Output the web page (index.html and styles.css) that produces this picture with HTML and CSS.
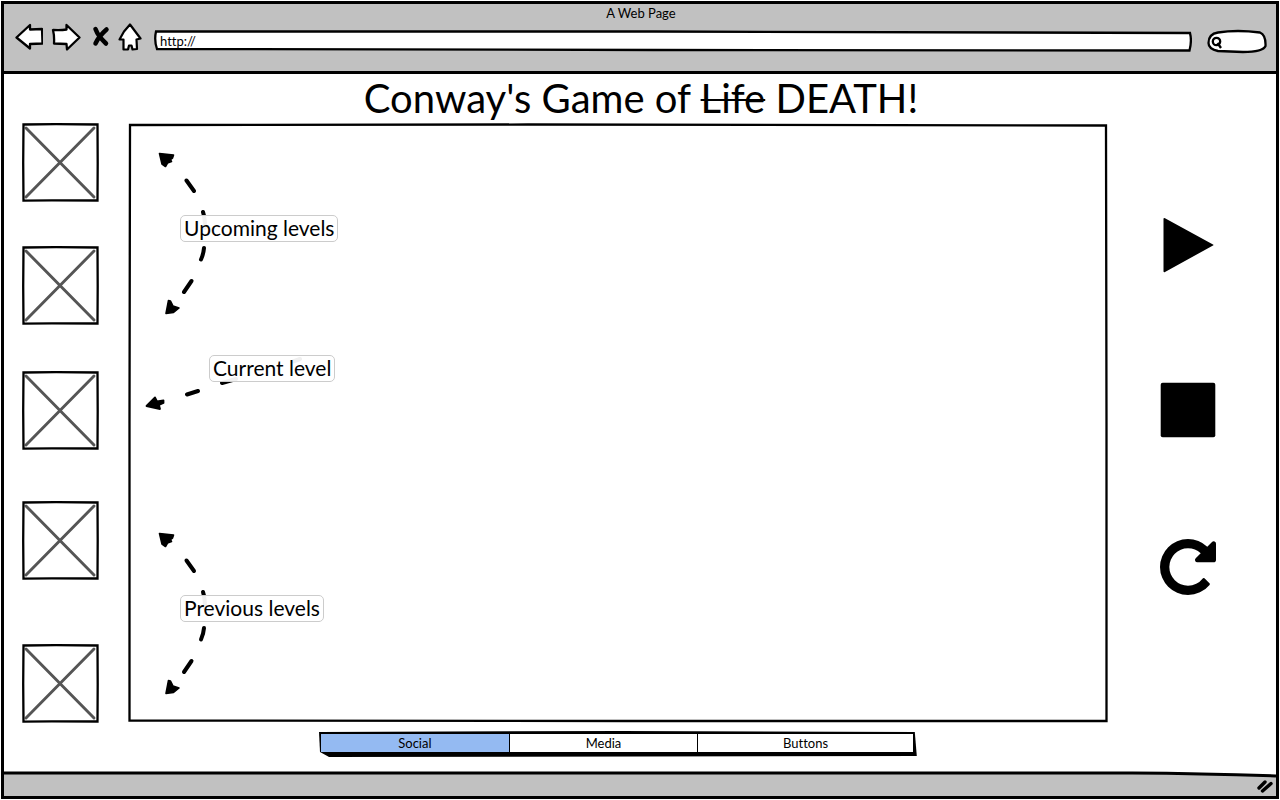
FILE: index.html
```html
<!DOCTYPE html>
<html lang="en">
<head>
<meta charset="utf-8">
<title>A Web Page</title>
<link rel="stylesheet" href="styles.css">
</head>
<body>
<svg class="defs" aria-hidden="true">
  <symbol id="placeholder" viewBox="0 0 77 79">
    <path d="M4 5 72 74M72 5 4 74" fill="none" stroke="#555" stroke-width="2.900" stroke-linecap="round"/>
    <path d="M1.500 1.500 34 1.200 75.500 1.500 75.700 40 75.500 77.500 30 77.300 1.500 77.700 1.200 40Z" fill="none" stroke="#000" stroke-width="2.300"/>
  </symbol>
  <symbol id="curve" viewBox="0 0 60 170">
    <path d="M4.500 3.500 18.500 5 17.500 8 15.500 9.500 16.500 11.500 12.500 13 10.500 16.500 7 14Z" stroke="#000" stroke-width="1.600" stroke-linejoin="round"/>
    <path d="M11 163.500 13.500 150.500 15.500 151 18 156 24 158 18.500 162.500Z" stroke="#000" stroke-width="1.600" stroke-linejoin="round"/>
    <path d="M31.500 30.500 39 41M48 62Q50 68 50 78M49 98Q48.500 104 46 109.500M36.500 131 29 142" fill="none" stroke="#000" stroke-width="4" stroke-linecap="round"/>
  </symbol>
</svg>

<div class="window">
  <header class="chrome">
    <div class="page-name">A Web Page</div>
    <div class="toolbar">
      <button class="tool" aria-label="Back"><svg width="28" height="28" viewBox="0 0 28 28"><path d="M1.500 14.500 15 2 15 6.500 27 6 27.500 20.500 15 21 15 25.500Z" fill="#fff" stroke="#000" stroke-width="2.300" stroke-linejoin="round"/></svg></button>
      <button class="tool" aria-label="Forward"><svg width="30" height="28" viewBox="0 0 30 28"><path d="M2 7Q10 7.500 15.500 6.500L15.500 2 28.500 14.500 16 26.500 15.500 21 3 20.500Q3.500 13 2 7Z" fill="#fff" stroke="#000" stroke-width="2.300" stroke-linejoin="round"/></svg></button>
      <button class="tool stop-load" aria-label="Stop"><svg width="18" height="28" viewBox="0 0 18 28"><path d="M3.500 6Q6 13 14 20.500M14.500 6.500Q7 13 3.500 20.500" fill="none" stroke="#000" stroke-width="4.500" stroke-linecap="round"/></svg></button>
      <button class="tool" aria-label="Home"><svg width="24" height="28" viewBox="0 0 24 28"><path d="M12 1.500 22.500 15.500 18.500 16.500 19 26 14.500 26.500 13.500 22.500 11 22.500 10 26.500 5.500 26.500 5.500 16.500 1.500 16.500 6 8.500Z" fill="#fff" stroke="#000" stroke-width="2.200" stroke-linejoin="round"/></svg></button>
      <div class="field address">
        <svg class="outline" viewBox="0 0 1038 22" preserveAspectRatio="none" aria-hidden="true"><path d="M2 1.500 500 1.500 1036 3Q1038 11 1035.500 20.500L500 20 3 19Q0 10 2 1.500Z"/></svg>
        <input type="text" value="http://" aria-label="Address">
      </div>
      <div class="field search">
        <svg class="outline" viewBox="0 0 60 25" aria-hidden="true"><path d="M11 3.500Q30 .500 53 3.500 59 6 58.500 17 56 23 36 23L11 22Q1.500 20 1.500 14 1.500 5 11 3.500Z"/><circle cx="9.500" cy="12.500" r="3.700"/><path d="M10.500 14 14 19"/></svg>
        <input type="text" aria-label="Search">
      </div>
    </div>
  </header>

  <main class="content">
    <h1 class="heading">Conway's Game of <s>Life</s> DEATH!</h1>

    <nav class="levels" aria-label="Levels">
      <svg class="thumb"><use href="#placeholder"/></svg>
      <svg class="thumb"><use href="#placeholder"/></svg>
      <svg class="thumb"><use href="#placeholder"/></svg>
      <svg class="thumb"><use href="#placeholder"/></svg>
      <svg class="thumb"><use href="#placeholder"/></svg>
    </nav>

    <section class="board">
      <svg class="outline" viewBox="0 0 980 600" preserveAspectRatio="none" aria-hidden="true"><path d="M2 2 400 1.500 978 2.500 978.500 300 978.500 598 500 598 1.500 597.500 1.500 300Z"/></svg>
      <svg class="note-arrow upcoming-arrow"><use href="#curve"/></svg>
      <svg class="note-arrow current-arrow" viewBox="0 0 170 60"><path d="M3.500 51 12 42.500 14 46.500 20.500 45.500 20.500 48 16 50 17 54Z" stroke="#000" stroke-width="1.800" stroke-linejoin="round"/><path d="M44 39.500 55 36M79 28 93 24M150 6.500 157 4" fill="none" stroke="#000" stroke-width="4" stroke-linecap="round"/></svg>
      <svg class="note-arrow previous-arrow"><use href="#curve"/></svg>
      <span class="note upcoming">Upcoming levels</span>
      <span class="note current">Current level</span>
      <span class="note previous">Previous levels</span>
    </section>

    <div class="controls">
      <button class="control" aria-label="Play"><svg width="56" height="56" viewBox="0 0 56 56"><path d="M3.500 2Q3.500 .500 5 1.300L53 27.500Q54 28 53 28.500L5 55Q3.500 56 3.500 54Z"/></svg></button>
      <button class="control" aria-label="Stop"><svg width="56" height="56" viewBox="0 0 56 56"><rect x=".700" y=".700" width="54.600" height="54.600" rx="2"/></svg></button>
      <button class="control" aria-label="Restart"><svg width="56" height="56" viewBox="128 128 1536 1536"><path d="M1664 256v448q0 26-19 45t-45 19h-448q-42 0-59-40-17-39 14-69l138-138q-148-137-349-137-104 0-198.500 40.500t-163.500 109.500-109.500 163.500-40.500 198.500 40.500 198.500 109.500 163.500 163.500 109.500 198.500 40.500q119 0 225-52t179-147q7-10 23-12 15 0 25 9l137 138q9 8 9.500 20.500t-7.500 22.500q-109 132-264 204.500t-327 72.500q-156 0-298-61t-245-164-164-245-61-298 61-298 164-245 245-164 298-61q147 0 284.500 55.500t244.500 156.500l130-129q29-31 70-14 39 17 39 59z"/></svg></button>
    </div>

    <div class="tabs" role="tablist">
      <svg class="tabs-shape" viewBox="0 0 595 26" preserveAspectRatio="none" aria-hidden="true"><path d="M0 1 300 0 593 1 595 25 10 26 1 21Z"/></svg>
      <button class="tab selected" role="tab" aria-selected="true">Social</button>
      <button class="tab" role="tab" aria-selected="false">Media</button>
      <button class="tab wide" role="tab" aria-selected="false">Buttons</button>
    </div>
  </main>

  <footer class="status">
    <svg class="status-line" viewBox="0 0 1274 8" preserveAspectRatio="none" aria-hidden="true"><path class="mask" d="M0 0H1274V5L1200 2 1150 1H0Z"/><path class="line" d="M0 2H1130Q1200 2.500 1274 5"/></svg>
    <svg class="grip" width="18" height="16" viewBox="0 0 18 16" aria-hidden="true"><path d="M3 9 9 3M6.500 12 15 4.500" fill="none" stroke="#000" stroke-width="3.400" stroke-linecap="round"/></svg>
  </footer>
</div>
</body>
</html>
```
FILE: styles.css
```css
* {
  box-sizing: border-box;
}

body {
  margin: 0;
  padding: 1px;
  background: #fff;
  color: #000;
  font-family: Lato, "Open Sans", sans-serif;
  font-variant-ligatures: none;
}

button {
  padding: 0;
  border: 0;
  background: none;
  color: inherit;
  font: inherit;
  font-variant-ligatures: none;
}

svg {
  display: block;
}

.defs {
  position: absolute;
  width: 0;
  height: 0;
}

.window {
  display: flex;
  flex-direction: column;
  min-height: calc(100vh - 2px);
  border: 3px solid #000;
}

.chrome {
  padding: 1px 9px 0 11px;
  height: 70px;
  border-bottom: 3px solid #000;
  background: #c1c1c1;
}

.page-name {
  text-align: center;
  font-size: 13px;
  line-height: 17px;
}

.toolbar {
  display: flex;
  align-items: center;
  gap: 8px;
  height: 30px;
}

.stop-load {
  margin: 0 0 0 3px;
}

.field {
  position: relative;
}

.address {
  flex: 1;
  height: 22px;
  margin: 8px 7px 0 4px;
}

.search {
  width: 60px;
  height: 25px;
  margin-top: 8px;
}

.outline {
  position: absolute;
  inset: 0;
  width: 100%;
  height: 100%;
  fill: #fff;
  stroke: #000;
  stroke-width: 2.3px;
}

.outline path {
  vector-effect: non-scaling-stroke;
}

.field input {
  position: relative;
  display: block;
  width: 100%;
  height: 100%;
  padding: 0 6px;
  border: 0;
  outline: 0;
  background: transparent;
  color: #000;
  font: 13px/16px Lato, "Open Sans", sans-serif;
  font-variant-ligatures: none;
}

.search input {
  padding-left: 18px;
}

.content {
  flex: 1;
  display: grid;
  grid-template-columns: 77px minmax(0, 1fr) 139px;
  grid-template-rows: 49px minmax(600px, 1fr) 48px;
  column-gap: 29px;
  padding-left: 18px;
}

.heading {
  grid-column: 1 / -1;
  margin: 0 16px 0 0;
  text-align: center;
  font-size: 40px;
  font-weight: 400;
  line-height: 48px;
}

.heading s {
  text-decoration-thickness: 2px;
}

.levels {
  display: grid;
  grid-template-rows: 123fr 125fr 130fr 143fr 79fr;
}

.thumb {
  width: 77px;
  height: 79px;
}

.board {
  position: relative;
}

.note-arrow {
  position: absolute;
  overflow: visible;
}

.upcoming-arrow,
.previous-arrow {
  left: 27px;
  width: 60px;
  height: 170px;
}

.upcoming-arrow {
  top: 27px;
}

.previous-arrow {
  top: 407px;
}

.current-arrow {
  left: 15px;
  top: 232px;
  width: 170px;
  height: 60px;
}

.note {
  position: absolute;
  padding: 0 3px 1px;
  border: 1px solid #ccc;
  border-radius: 5px;
  background: rgba(255, 255, 255, 0.94);
  font-size: 21px;
  line-height: 24px;
  white-space: nowrap;
}

.upcoming {
  left: 52px;
  top: 92px;
}

.current {
  left: 81px;
  top: 232px;
}

.previous {
  left: 52px;
  top: 472px;
}

.controls {
  display: grid;
  grid-template-rows: 244fr 86fr 228fr 42fr;
  place-items: center start;
  padding-left: 23px;
}

.tabs {
  position: relative;
  grid-column: 2;
  justify-self: center;
  display: flex;
  gap: 1px;
  width: 61%;
  height: 26px;
  margin-top: 8px;
  padding: 3px 4px 5px 2px;
}

.tabs-shape {
  position: absolute;
  inset: 0;
  width: 100%;
  height: 100%;
}

.tab {
  position: relative;
  flex: 187;
  background: #fff;
  font-size: 13px;
  line-height: 18px;
}

.tab.wide {
  flex: 214;
}

.tab.selected {
  background: #94baf2;
}

.status {
  position: relative;
  display: flex;
  justify-content: flex-end;
  align-items: flex-end;
  height: 25px;
  padding: 0 2px 1px;
  background: #c1c1c1;
}

.status-line {
  position: absolute;
  inset: 0 0 auto;
  width: 100%;
  height: 8px;
}

.status-line .mask {
  fill: #fff;
}

.status-line .line {
  fill: none;
  stroke: #000;
  stroke-width: 3px;
}
```
